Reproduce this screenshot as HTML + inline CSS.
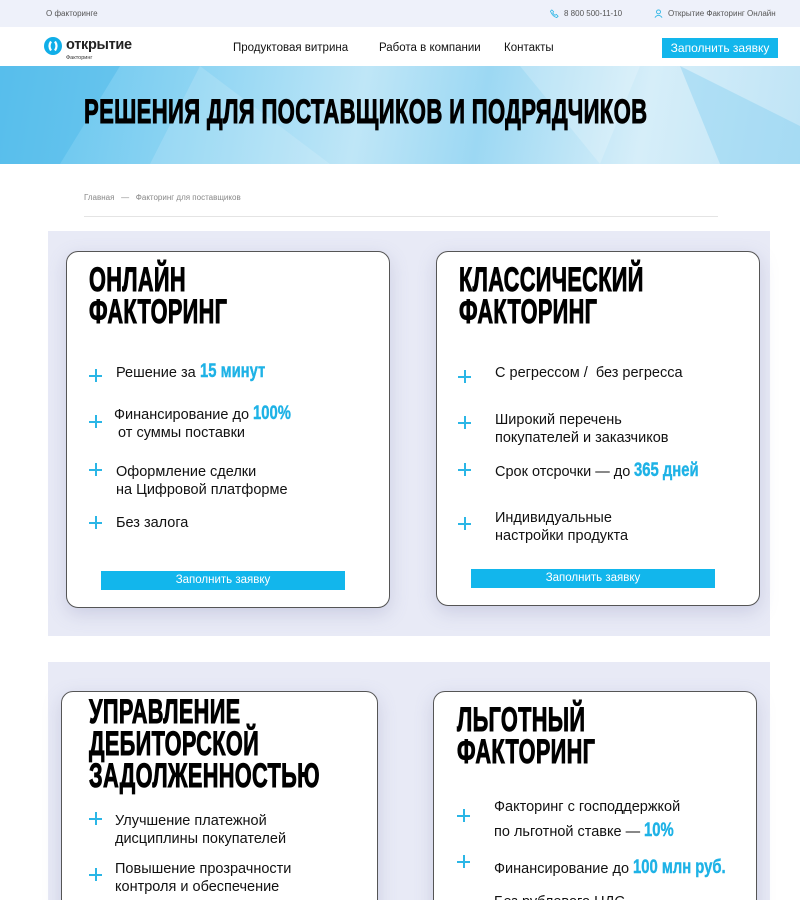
<!DOCTYPE html>
<html><head><meta charset="utf-8"><style>
*{margin:0;padding:0;box-sizing:border-box}
html{width:800px;height:900px;overflow:hidden}
body{width:800px;height:900px;overflow:hidden;position:relative;background:#fff;font-family:"Liberation Sans",sans-serif;color:#111}
.a{position:absolute;white-space:nowrap}
.h{position:absolute;font-weight:bold;font-size:34px;line-height:32px;transform:scaleX(0.64);transform-origin:0 0;white-space:nowrap;color:#000;letter-spacing:0.5px;-webkit-text-stroke:1px #000}
.card{position:absolute;background:#fff;border:1px solid #555;border-radius:12px;box-shadow:0 6px 18px rgba(120,125,170,.25)}
.li{position:absolute;font-size:14.5px;line-height:18px;color:#111;white-space:nowrap}
.pl{position:absolute;width:13px;height:13px}
.pl:before{content:"";position:absolute;left:0;top:6px;width:13px;height:1.5px;background:#2bb6e6}
.pl:after{content:"";position:absolute;left:6px;top:0;width:1.5px;height:13px;background:#2bb6e6}
.b{display:inline-block;color:#1eb2e6;font-weight:bold;font-size:19px;transform:scaleX(.78);transform-origin:0 70%;vertical-align:baseline;-webkit-text-stroke:0.4px #1eb2e6}
.btn{position:absolute;background:#12b6ec;color:#fff;font-size:11.5px;text-align:center;line-height:19px;height:19px}
</style></head><body>
<div class="a" style="left:0;top:0;width:800px;height:27px;background:#eef1fa"></div>
<div class="a" style="left:46px;top:9px;font-size:8px;color:#555">О факторинге</div>
<svg class="a" style="left:550px;top:9px" width="9" height="9" viewBox="0 0 10 10"><path d="M2 1 L4 3 L3 4.5 Q4.5 6.5 5.5 7 L7 6 L9 8 L7.5 9.5 Q3 8.5 0.5 2.5Z" fill="none" stroke="#2bb6e6" stroke-width="0.9"/></svg>
<div class="a" style="left:564px;top:9px;font-size:8px;color:#555">8 800 500-11-10</div>
<svg class="a" style="left:654px;top:9px" width="9" height="9" viewBox="0 0 10 10"><circle cx="5" cy="3.2" r="2.2" fill="none" stroke="#2bb6e6"/><path d="M1 9.5 Q5 4.5 9 9.5" fill="none" stroke="#2bb6e6"/></svg>
<div class="a" style="left:668px;top:9px;font-size:8px;color:#555">Открытие Факторинг Онлайн</div>
<svg class="a" style="left:44px;top:37px" width="18" height="18" viewBox="0 0 18 18"><circle cx="9" cy="9" r="9" fill="#10aee8"/><path d="M7 4.5 Q4 9 7 13.5 M11 4.5 Q14 9 11 13.5" stroke="#fff" stroke-width="2.2" fill="none"/></svg>
<div class="a" style="left:66px;top:37px;font-size:14.5px;font-weight:bold;color:#222;letter-spacing:-0.3px">открытие</div>
<div class="a" style="left:66px;top:55px;font-size:5.5px;color:#333">Факторинг</div>
<div class="a" style="left:233px;top:42px;font-size:11.5px;color:#111">Продуктовая витрина</div>
<div class="a" style="left:379px;top:42px;font-size:11.5px;color:#111">Работа в компании</div>
<div class="a" style="left:504px;top:42px;font-size:11.5px;color:#111">Контакты</div>
<div class="btn" style="left:662px;top:38px;width:116px;height:20px;line-height:20px;font-size:12px">Заполнить заявку</div>
<div class="a" style="left:0;top:66px;width:800px;height:98px;background:linear-gradient(100deg,#5ec2ee 0%,#8fd5f3 25%,#bfe6f7 45%,#9cd8f3 60%,#d6eef9 80%,#bfe4f6 100%)"></div>
<svg class="a" style="left:0;top:66px" width="800" height="98"><polygon points="0,0 120,0 60,98 0,98" fill="#4fb9ea" opacity=".5"/><polygon points="200,0 330,98 150,98" fill="#fff" opacity=".15"/><polygon points="520,0 640,0 600,98" fill="#fff" opacity=".2"/><polygon points="680,0 800,60 800,98 720,98" fill="#7fcdf1" opacity=".4"/></svg>
<div class="h" style="left:84px;top:93px;font-size:34px;line-height:38px;transform:scaleX(.65)">РЕШЕНИЯ ДЛЯ ПОСТАВЩИКОВ И ПОДРЯДЧИКОВ</div>
<div class="a" style="left:84px;top:193px;font-size:8px;color:#888">Главная &nbsp;&nbsp;—&nbsp;&nbsp; Факторинг для поставщиков</div>
<div class="a" style="left:84px;top:216px;width:634px;height:1px;background:#e4e4e4"></div>

<div class="a" style="left:48px;top:231px;width:722px;height:405px;background:#e8eaf6"></div>
<div class="card" style="left:66px;top:251px;width:324px;height:357px"></div>
<div class="h" style="left:89px;top:264px">ОНЛАЙН<br>ФАКТОРИНГ</div>
<div class="pl" style="left:89px;top:369px"></div><div class="li" style="left:116px;top:363px">Решение за <span class="b">15 минут</span></div>
<div class="pl" style="left:89px;top:415px"></div><div class="li" style="left:114px;top:405px">Финансирование до <span class="b">100%</span><br>&nbsp;от суммы поставки</div>
<div class="pl" style="left:89px;top:463px"></div><div class="li" style="left:116px;top:463px">Оформление сделки<br>на Цифровой платформе</div>
<div class="pl" style="left:89px;top:516px"></div><div class="li" style="left:116px;top:514px">Без залога</div>
<div class="btn" style="left:101px;top:571px;width:244px">Заполнить заявку</div>

<div class="card" style="left:436px;top:251px;width:324px;height:355px"></div>
<div class="h" style="left:459px;top:264px">КЛАССИЧЕСКИЙ<br>ФАКТОРИНГ</div>
<div class="pl" style="left:458px;top:370px"></div><div class="li" style="left:495px;top:364px">С регрессом /&nbsp; без регресса</div>
<div class="pl" style="left:458px;top:416px"></div><div class="li" style="left:495px;top:411px">Широкий перечень<br>покупателей и заказчиков</div>
<div class="pl" style="left:458px;top:463px"></div><div class="li" style="left:495px;top:462px">Срок отсрочки — до <span class="b">365 дней</span></div>
<div class="pl" style="left:458px;top:517px"></div><div class="li" style="left:495px;top:509px">Индивидуальные<br>настройки продукта</div>
<div class="btn" style="left:471px;top:569px;width:244px">Заполнить заявку</div>

<div class="a" style="left:48px;top:662px;width:722px;height:238px;background:#e8eaf6"></div>
<div class="card" style="left:61px;top:691px;width:317px;height:240px"></div>
<div class="h" style="left:89px;top:696px">УПРАВЛЕНИЕ<br>ДЕБИТОРСКОЙ<br>ЗАДОЛЖЕННОСТЬЮ</div>
<div class="pl" style="left:89px;top:812px"></div><div class="li" style="left:115px;top:812px">Улучшение платежной<br>дисциплины покупателей</div>
<div class="pl" style="left:89px;top:868px"></div><div class="li" style="left:115px;top:860px">Повышение прозрачности<br>контроля и обеспечение</div>

<div class="card" style="left:433px;top:691px;width:324px;height:240px"></div>
<div class="h" style="left:457px;top:704px">ЛЬГОТНЫЙ<br>ФАКТОРИНГ</div>
<div class="pl" style="left:457px;top:809px"></div><div class="li" style="left:494px;top:795px;line-height:24px">Факторинг с господдержкой<br>по льготной ставке — <span class="b">10%</span></div>
<div class="pl" style="left:457px;top:855px"></div><div class="li" style="left:494px;top:859px">Финансирование до <span class="b">100 млн руб.</span></div>
<div class="li" style="left:494px;top:893px">Без рублевого НДС</div>
</body></html>
